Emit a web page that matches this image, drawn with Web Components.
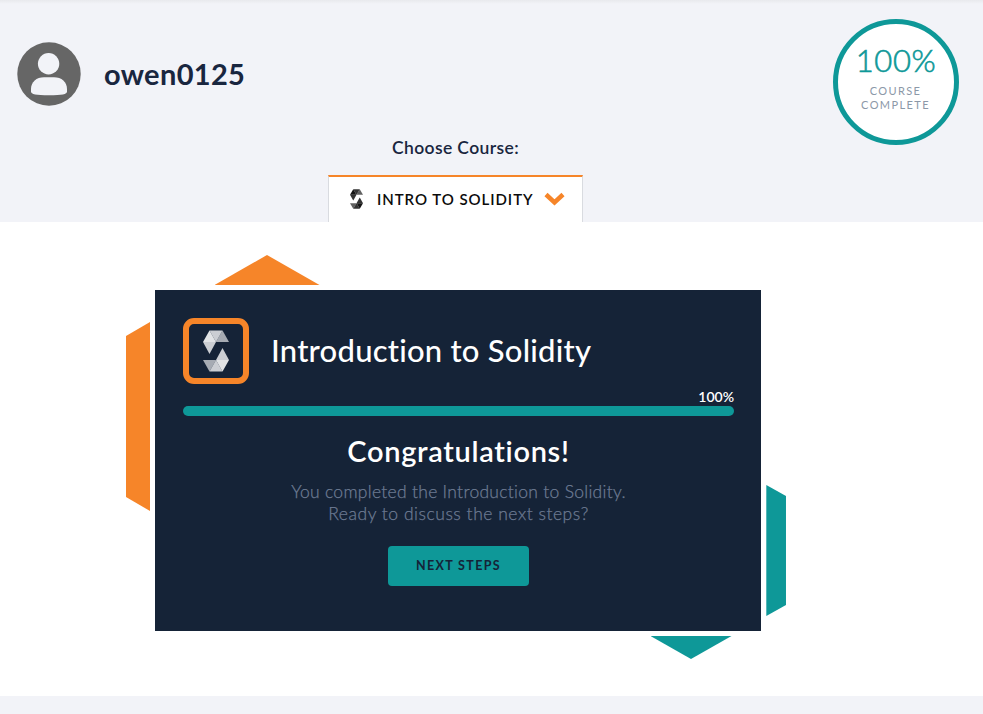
<!DOCTYPE html>
<html lang="en">
<head>
<meta charset="utf-8">
<title>Course progress</title>
<style>
body{margin:0;background:#f2f3f8;font-family:Lato,"Open Sans",sans-serif;font-variant-ligatures:none;color:#152337;
--navy:#152337;--teal:#0e9898;--orange:#f68529}
</style>
</head>
<body>
<course-page></course-page>
<script>
const define = (name, html) => {
  const template = document.createElement('template');
  template.innerHTML = html;
  customElements.define(name, class extends HTMLElement {
    constructor() {
      super();
      this.attachShadow({ mode: 'open' }).append(template.content.cloneNode(true));
    }
  });
};

define('user-badge', `<style>
:host{display:flex;align-items:center;gap:23px}
svg{display:block;width:64px;height:64px}
span{font-size:29px;font-weight:700;line-height:36px;letter-spacing:.34px;color:#19263f}
</style>
<svg viewBox="0 0 64 64"><circle cx="32" cy="32" r="31.7" fill="#666"/><circle cx="31.6" cy="21.8" r="10.7" fill="#f2f3f8"/><path fill="#f2f3f8" d="M27 35.3H37C44.5 35.3 50 40 50 47V49.500C50 52.500 45 53.200 32 53.200S14 52.500 14 49.500V47C14 40 19.500 35.300 27 35.300Z"/></svg>
<span><slot></slot></span>`);

define('progress-ring', `<style>
:host{display:flex;flex-direction:column;align-items:center;box-sizing:border-box;width:126px;height:126px;border:5px solid var(--teal);border-radius:50%;background:#fff;padding-top:16px}
.value{font-size:31px;font-weight:300;line-height:40px;color:var(--teal);letter-spacing:.6px;-webkit-text-stroke:.6px var(--teal)}
.label{font-size:11px;line-height:14px;letter-spacing:1.4px;text-align:center;color:#8c98a8;margin-top:4px;padding-right:1px}
</style>
<div class="value"><slot></slot></div><div class="label"><slot name="label"></slot></div>`);

define('solidity-mark', `<style>
:host{display:block;width:var(--w,26px);height:var(--h,42px)}svg{display:block;width:100%;height:100%}
path{fill:var(--ink,#fff)}.a{opacity:var(--a,.88)}.b{opacity:var(--b,.78)}.c{opacity:var(--c,.62)}
</style>
<svg viewBox="0 0 26 42" preserveAspectRatio="none">
<path class="a" d="M6.500 .5L13 12H0Z"/><path class="b" d="M6.500 .5H19.500L13 12Z"/><path class="c" d="M19.500 .5L26 12H13Z"/><path class="b" d="M0 12H13L6.500 24Z"/>
<path class="b" d="M19.500 18L26 30H13Z"/><path class="c" d="M0 30H13L6.500 41.500Z"/><path class="b" d="M13 30L19.500 41.500H6.500Z"/><path class="a" d="M13 30H26L19.500 41.500Z"/>
</svg>`);

define('course-picker', `<style>
:host{display:flex;flex-direction:column;align-items:center;width:255px}
.title{font-size:17.500px;font-weight:600;line-height:22px;letter-spacing:.38px;color:#19263f;padding-top:1px;margin-bottom:16px}
.tab{display:flex;align-items:center;box-sizing:border-box;width:255px;height:47px;background:#fff;border:1px solid #d9dbe0;border-top:2px solid var(--orange);border-bottom:0;padding:0 17px 2px 21px;color:#0b0b0b;font-size:15px;font-weight:600;letter-spacing:.95px;white-space:nowrap}
solidity-mark{--w:13px;--h:20px;--ink:#000;--a:.92;--b:.8;--c:.62;margin-right:14px}
.chevron{width:21px;height:14px;margin-left:auto}
</style>
<div class="title"><slot name="title"></slot></div>
<div class="tab"><solidity-mark></solidity-mark><slot></slot><svg class="chevron" viewBox="0 0 21 14"><path d="M2 2.500L10.500 10.500L19 2.500" fill="none" stroke="#f68529" stroke-width="4.500"/></svg></div>`);

define('progress-bar', `<style>
:host{display:block}
.value{font-size:14px;font-weight:600;line-height:18px;text-align:right;color:#fff}
.bar{height:10px;border-radius:5px;background:var(--teal)}
</style><div class="value"><slot></slot></div><div class="bar"></div>`);

define('action-button', `<style>
:host{display:block}
button{display:block;width:141px;height:40px;border:0;border-radius:4px;background:var(--teal);color:var(--navy);padding:0 0 2px;font:700 12.500px Lato,sans-serif;letter-spacing:1.350px}
</style><button><slot></slot></button>`);

define('course-card', `<style>
:host{display:block;position:relative;box-sizing:border-box;width:606px;height:340.600px;padding:28px 27px 0 28px;background:var(--navy)}
.head{display:flex;align-items:center;gap:22px;height:66px}
.logo{display:flex;align-items:center;justify-content:center;box-sizing:border-box;width:66px;height:66px;border:6px solid var(--orange);border-radius:11px}
h1{margin:0;padding-bottom:2px;font-size:31px;font-weight:500;line-height:40px;letter-spacing:.23px;color:#fff;white-space:nowrap}
progress-bar{margin-top:4px}
.body{display:flex;flex-direction:column;align-items:center;text-align:center}
h2{margin:17px 0 0;font-size:29px;font-weight:600;line-height:36px;letter-spacing:.68px;color:#fff}
.text{margin:12px 0 21px;font-size:17.500px;line-height:22px;font-weight:300;color:#6d7b93;-webkit-text-stroke:.25px #6d7b93}
.shape{position:absolute;display:block}
.top{left:59.500px;top:-35px;width:105px;height:30px;background:var(--orange);clip-path:polygon(50% 0,100% 100%,0 100%)}
.left{left:-29px;top:32px;width:24px;height:189px;background:var(--orange);clip-path:polygon(0 14px,100% 0,100% 100%,0 175px)}
.right{left:611.300px;top:195px;width:19.700px;height:131px;background:var(--teal);clip-path:polygon(0 0,100% 11px,100% 120px,0 100%)}
.bottom{left:495.500px;top:346px;width:81px;height:23px;background:var(--teal);clip-path:polygon(0 0,100% 0,50% 100%)}
</style>
<i class="shape top"></i><i class="shape left"></i><i class="shape right"></i><i class="shape bottom"></i>
<div class="head"><div class="logo"><solidity-mark></solidity-mark></div><h1><slot name="title"></slot></h1></div>
<progress-bar><slot name="progress"></slot></progress-bar>
<div class="body"><h2><slot name="heading"></slot></h2><div class="text"><slot></slot></div><action-button><slot name="action"></slot></action-button></div>`);

define('course-page', `<style>
:host{display:block;height:714px;overflow:hidden}
header{display:flex;flex-direction:column;box-sizing:border-box;height:222px;padding:19px 24px 0 17px;background:linear-gradient(#e8e9ed,#f2f3f8 4px)}
.row{display:flex;justify-content:space-between;align-items:flex-start;height:117px}
user-badge{margin-top:23px}
course-picker{margin-left:311px}
main{box-sizing:border-box;height:474px;padding:68px 0 0 155px;background:#fff}
.first{letter-spacing:.29px}.second{letter-spacing:.53px}
</style>
<header><div class="row"><user-badge>owen0125</user-badge><progress-ring>100%<span slot="label">COURSE<br>COMPLETE</span></progress-ring></div>
<course-picker><span slot="title">Choose Course:</span>INTRO TO SOLIDITY</course-picker></header>
<main><course-card><span slot="title">Introduction to Solidity</span><span slot="progress">100%</span><span slot="heading">Congratulations!</span>
<span class="first">You completed the Introduction to Solidity.</span><br><span class="second">Ready to discuss the next steps?</span><span slot="action">NEXT STEPS</span></course-card></main>`);
</script>
</body>
</html>
